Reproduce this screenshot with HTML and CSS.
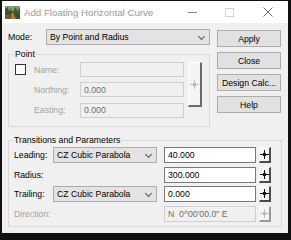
FILE: index.html
```html
<!DOCTYPE html>
<html lang="en">
<head>
    <meta charset="UTF-8">
    <title>Add Floating Horizontal Curve</title>
    <link rel="stylesheet" href="styles.css">
</head>
<body>

<div class="window">
    <div class="titlebar">
        <svg class="app-icon" width="15" height="13" viewBox="0 0 15 13">
            <rect width="15" height="13" fill="#3d4a2c"/>
            <rect y="0" width="15" height="5" fill="#8a9a7a"/>
            <path d="M0 3 L3 1 L4 6 L6 2 L7 7 L0 8 Z" fill="#2f5a2a"/>
            <path d="M9 3 L11 1 L12 5 L15 2 L15 8 L9 7 Z" fill="#37612e"/>
            <path d="M5 13 L7 6 L8 6 L11 13 Z" fill="#b07a3c"/>
            <path d="M0 9 L5 8 L4 13 L0 13 Z" fill="#7a5a2a"/>
        </svg>
        <span class="title">Add Floating Horizontal Curve</span>
        <span class="tb-btn tb-min"></span>
        <span class="tb-btn tb-max"></span>
        <span class="tb-btn tb-close">
            <svg width="10" height="10" viewBox="0 0 10 10"><path d="M0.5 0.5 L9.5 9.5 M9.5 0.5 L0.5 9.5" stroke="#6f6f6f" stroke-width="1"/></svg>
        </span>
    </div>

    <div class="content">
        <div class="top">
            <div class="left">
                <div class="mode-row">
                    <span class="mode-label">Mode:</span>
                    <div class="select select-mode">By Point and Radius<span class="chevron"></span></div>
                </div>

                <fieldset class="group group-point">
                    <legend>Point</legend>
                    <div class="point-grid">
                        <span class="checkbox"></span>
                        <span class="lbl disabled">Name:</span>
                        <div class="field field-off"></div>
                        <span class="pick pick-tall"><svg width="9" height="9" viewBox="0 0 9 9"><path d="M4.5 0 V9 M0 4.5 H9" stroke="#c2c2c2"/><rect x="3" y="3" width="3" height="3" fill="#b8b8b8"/></svg></span>

                        <span></span>
                        <span class="lbl disabled">Northing:</span>
                        <div class="field field-off">0.000</div>

                        <span></span>
                        <span class="lbl disabled">Easting:</span>
                        <div class="field field-off">0.000</div>
                    </div>
                </fieldset>
            </div>

            <div class="buttons">
                <button class="btn">Apply</button>
                <button class="btn">Close</button>
                <button class="btn">Design Calc...</button>
                <button class="btn">Help</button>
            </div>
        </div>

        <fieldset class="group group-trans">
            <legend>Transitions and Parameters</legend>
            <div class="trans-grid">
                <span class="lbl">Leading:</span>
                <div class="select">CZ Cubic Parabola<span class="chevron"></span></div>
                <div class="field">40.000</div>
                <span class="pick"><svg width="9" height="9" viewBox="0 0 9 9"><path d="M4.5 0 V9 M0 4.5 H9" stroke="#111"/><rect x="3" y="3" width="3" height="3" fill="#111"/></svg></span>

                <span class="lbl">Radius:</span>
                <span></span>
                <div class="field">300.000</div>
                <span class="pick"><svg width="9" height="9" viewBox="0 0 9 9"><path d="M4.5 0 V9 M0 4.5 H9" stroke="#111"/><rect x="3" y="3" width="3" height="3" fill="#111"/></svg></span>

                <span class="lbl">Trailing:</span>
                <div class="select">CZ Cubic Parabola<span class="chevron"></span></div>
                <div class="field">0.000</div>
                <span class="pick"><svg width="9" height="9" viewBox="0 0 9 9"><path d="M4.5 0 V9 M0 4.5 H9" stroke="#111"/><rect x="3" y="3" width="3" height="3" fill="#111"/></svg></span>

                <span class="lbl disabled">Direction:</span>
                <span></span>
                <div class="field field-off">N&nbsp; 0^00'00.0" E</div>
                <span class="pick pick-off"><svg width="9" height="9" viewBox="0 0 9 9"><path d="M4.5 0 V9 M0 4.5 H9" stroke="#c2c2c2"/><rect x="3" y="3" width="3" height="3" fill="#b8b8b8"/></svg></span>
            </div>
        </fieldset>
    </div>
</div>

</body>
</html>
```

FILE: styles.css
```css
body {
    margin: 0;
    background-color: #111;
    font-family: "Liberation Sans", Arial, sans-serif;
    font-size: 8.7px;
    color: #000;
}

.window {
    width: 291px;
    height: 240px;
    box-sizing: border-box;
    padding: 1px 3px 7px 2px;
    display: flex;
    flex-direction: column;
}

/* title bar */

.titlebar {
    height: 22px;
    background-color: #fff;
    display: flex;
    align-items: center;
    flex-shrink: 0;
}

.app-icon {
    margin-left: 3px;
    margin-right: 4px;
}

.title {
    font-size: 9.7px;
    color: #9a9a9a;
    flex: 1;
}

.tb-btn {
    display: flex;
    align-items: center;
    justify-content: center;
}

.tb-min {
    width: 9px;
    height: 1px;
    background-color: #8a8a8a;
    margin-right: 28px;
}

.tb-max {
    width: 7px;
    height: 7px;
    border: 1px solid #d4d4d4;
    margin-right: 29px;
}

.tb-close {
    width: 10px;
    height: 10px;
    margin-right: 15px;
}

/* dialog body */

.content {
    flex: 1;
    background-color: #f0f0f0;
    padding: 6px 6px 0 6px;
}

.top {
    display: flex;
}

.left {
    width: 202px;
}

.mode-row {
    display: flex;
    align-items: center;
    height: 16px;
}

.mode-label {
    width: 38px;
}

.select {
    height: 16px;
    box-sizing: border-box;
    background-color: #e3e3e3;
    border: 1px solid #adadad;
    display: flex;
    align-items: center;
    padding-left: 3px;
    position: relative;
}

.select-mode {
    flex: 1;
}

.chevron {
    position: absolute;
    right: 5px;
    top: 4px;
    width: 4px;
    height: 4px;
    border-right: 1px solid #555;
    border-bottom: 1px solid #555;
    transform: rotate(45deg);
}

.buttons {
    margin-left: 7px;
    margin-top: 1px;
    display: flex;
    flex-direction: column;
    gap: 5px;
}

.btn {
    width: 64px;
    height: 17px;
    padding: 0;
    background-color: #e1e1e1;
    border: 1px solid #adadad;
    font-family: inherit;
    font-size: 8.7px;
    color: #000;
}

/* group boxes */

.group {
    margin: 0;
    border: 1px solid #d9d9d9;
    min-width: 0;
}

.group legend {
    padding: 0 1px;
    margin-left: -1px;
    line-height: 10px;
}

.group-point {
    margin-top: 4px;
    padding: 3px 9px 8px 6px;
}

.point-grid {
    display: grid;
    grid-template-columns: 11px 54px 104px 18px;
    grid-template-rows: 15px 15px 16px;
    row-gap: 5px;
    align-items: center;
}

.checkbox {
    width: 9px;
    height: 9px;
    border: 1px solid #333;
    background-color: #fafafa;
}

.point-grid .lbl {
    padding-left: 8px;
}

.lbl.disabled {
    color: #a3a3a3;
}

.field {
    height: 16px;
    box-sizing: border-box;
    background-color: #fff;
    border: 1px solid #7a7a7a;
    padding-left: 3px;
    display: flex;
    align-items: center;
}

.point-grid .field {
    height: 15px;
}

.field-off {
    background-color: #f0f0f0;
    border-color: #cfcfcf;
    color: #6d6d6d;
}

.pick {
    box-sizing: border-box;
    width: 12px;
    height: 16px;
    margin-left: 3px;
    background-color: #f4f4f4;
    border-top: 1px solid #fff;
    border-left: 1px solid #fff;
    border-right: 2px solid #4a4a4a;
    border-bottom: 2px solid #4a4a4a;
    display: flex;
    align-items: center;
    justify-content: center;
}

.pick-tall {
    grid-column: 4;
    grid-row: 1 / 4;
    align-self: start;
    width: 14px;
    height: 45px;
    margin-left: 4px;
    border-right-color: #6a6a6a;
    border-bottom-color: #6a6a6a;
}

.pick-off {
    border-right-color: #9a9a9a;
    border-bottom-color: #9a9a9a;
}

.group-trans {
    margin-top: 8px;
    padding: 2px 5px 4px 5px;
}

.trans-grid {
    display: grid;
    grid-template-columns: 39px 104px 99px 15px;
    grid-template-rows: 16px 16px 16px 16px;
    row-gap: 3.5px;
    align-items: center;
}

.trans-grid .field {
    margin-left: 7px;
}
```
